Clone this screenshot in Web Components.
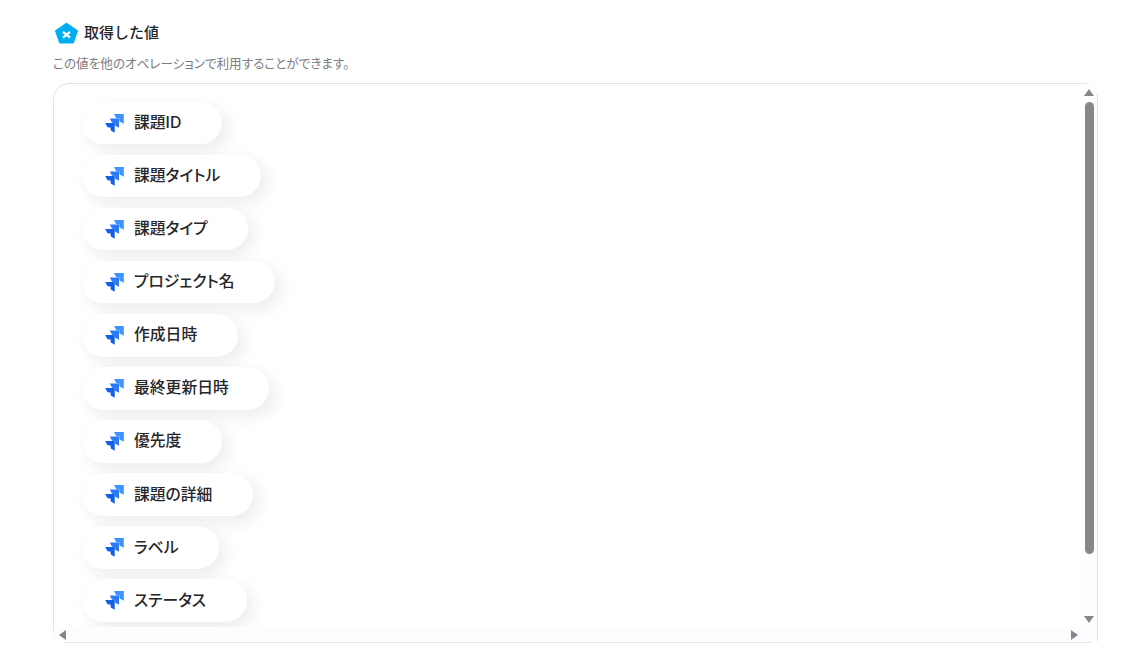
<!DOCTYPE html>
<html lang="ja">
<head>
<meta charset="utf-8">
<style>
html,body{margin:0;padding:0;background:#fff;}
body{font-family:"Inter","Noto Sans CJK JP",sans-serif;color:#2b2b2f;}
</style>
</head>
<body>
<output-panel>
  <span slot="title">取得した値</span>
  <span slot="desc">この値を他のオペレーションで利用することができます。</span>
  <value-pill>課題ID</value-pill>
  <value-pill>課題タイトル</value-pill>
  <value-pill>課題タイプ</value-pill>
  <value-pill>プロジェクト名</value-pill>
  <value-pill>作成日時</value-pill>
  <value-pill>最終更新日時</value-pill>
  <value-pill>優先度</value-pill>
  <value-pill>課題の詳細</value-pill>
  <value-pill>ラベル</value-pill>
  <value-pill>ステータス</value-pill>
  <value-pill>担当者</value-pill>
</output-panel>
<script>
class ValuePill extends HTMLElement{
  constructor(){
    super();
    this.attachShadow({mode:'open'}).innerHTML=`
    <style>
      :host{display:flex;width:fit-content;align-items:center;height:42.4px;box-sizing:border-box;padding:0 40.500px 0 23px;gap:10px;border-radius:22px;background:#fff;box-shadow:6px 6px 16px rgba(40,40,60,.085);font:500 15.800px/1 "Inter","Noto Sans CJK JP",sans-serif;font-feature-settings:"palt";color:#26262a;flex:none}
      svg{width:19px;height:19px;flex:none;display:block}
    </style>
    <svg viewBox="0 0 19 19">
      <path fill="#3f93ff" d="M9 0H18.800V9.800L14.500 7.500 14.300 4.500 11.300 4.300z"/>
      <path fill="#2a7bfa" d="M4.800 4.500H14V13.800L9.900 11.500 9.700 9 7 8.800z"/>
      <path fill="#0f5fe8" d="M.2 9H9.700V18.800L5.800 16.500 5.500 13.400 2.500 13.200z"/>
    </svg>
    <slot></slot>`;
  }
}
customElements.define('value-pill',ValuePill);

class OutputPanel extends HTMLElement{
  constructor(){
    super();
    this.attachShadow({mode:'open'}).innerHTML=`
    <style>
      :host{display:flex;flex-direction:column;box-sizing:border-box;width:1134px;height:671px;padding:20px 36px 28px 53px}
      header{display:flex;align-items:center;gap:6px;height:26px;padding-left:2px;font:500 15px/1 "Inter","Noto Sans CJK JP",sans-serif;color:#26262a}
      header svg{width:23px;height:23px;display:block;flex:none}
      .t{margin-top:-2px}
      p{margin:10px 0 0;height:15px;font:400 12.600px/15px "Inter","Noto Sans CJK JP",sans-serif;font-feature-settings:"palt";color:#7d7d83}
      .frame{margin-top:12px;flex:1;min-height:0;position:relative;display:flex}
      .box{flex:1;min-width:0;box-sizing:border-box;border:1px solid #e3e2e6;border-radius:16px 0 0 0;overflow:hidden;display:grid;grid-template-columns:1fr 16px;grid-template-rows:minmax(0,1fr) 15px}
      .list{overflow:hidden;display:flex;flex-direction:column;gap:10.650px;padding:18px 0 0 28px;min-height:0}
      .v,.h,.corner{background:#fdfcfe}
      .v{display:flex;flex-direction:column;align-items:center;padding-top:5px;gap:6px;min-height:0}
      .h{display:flex;align-items:center;justify-content:space-between;padding:0 3px 0 5px}
      .up{width:0;height:0;border:5px solid transparent;border-top:0;border-bottom:7px solid #87878b}
      .down{width:0;height:0;border:5px solid transparent;border-bottom:0;border-top:7px solid #87878b;margin-top:auto;margin-bottom:4px}
      .left{width:0;height:0;border:5.500px solid transparent;border-left:0;border-right:7px solid #87878b}
      .right{width:0;height:0;border:5.500px solid transparent;border-right:0;border-left:7px solid #87878b}
      .thumb{width:9px;height:452px;border-radius:5px;background:#87878b;flex:none}
      .mask{position:absolute;background:#fff}
      .a{top:0;right:0;width:9px;height:1px}
      .b{top:0;right:0;width:1px;height:11px}
      .c{bottom:0;left:0;width:11px;height:1px}
      .d{bottom:0;left:0;width:1px;height:10px}
      .e{bottom:0;right:0;width:7px;height:1px}
      .f{bottom:0;right:0;width:1px;height:2px}
    </style>
    <header>
      <svg viewBox="0 0 23 23">
        <path fill="#00aeef" stroke="#00aeef" stroke-width="2" stroke-linejoin="round" d="M11.500 1.800 22 9 18 20.500H5L1 9z"/>
        <path fill="none" stroke="#fff" stroke-width="2.200" d="M8 9.800 15 15.600M15 9.800 8 15.600"/>
      </svg>
      <div class="t"><slot name="title"></slot></div>
    </header>
    <p><slot name="desc"></slot></p>
    <div class="frame">
      <div class="box">
        <div class="list"><slot></slot></div>
        <div class="v"><i class="up"></i><i class="thumb"></i><i class="down"></i></div>
        <div class="h"><i class="left"></i><i class="right"></i></div>
        <div class="corner"></div>
      </div>
      <i class="mask a"></i><i class="mask b"></i><i class="mask c"></i><i class="mask d"></i><i class="mask e"></i><i class="mask f"></i>
    </div>`;
  }
}
customElements.define('output-panel',OutputPanel);
</script>
</body>
</html>
